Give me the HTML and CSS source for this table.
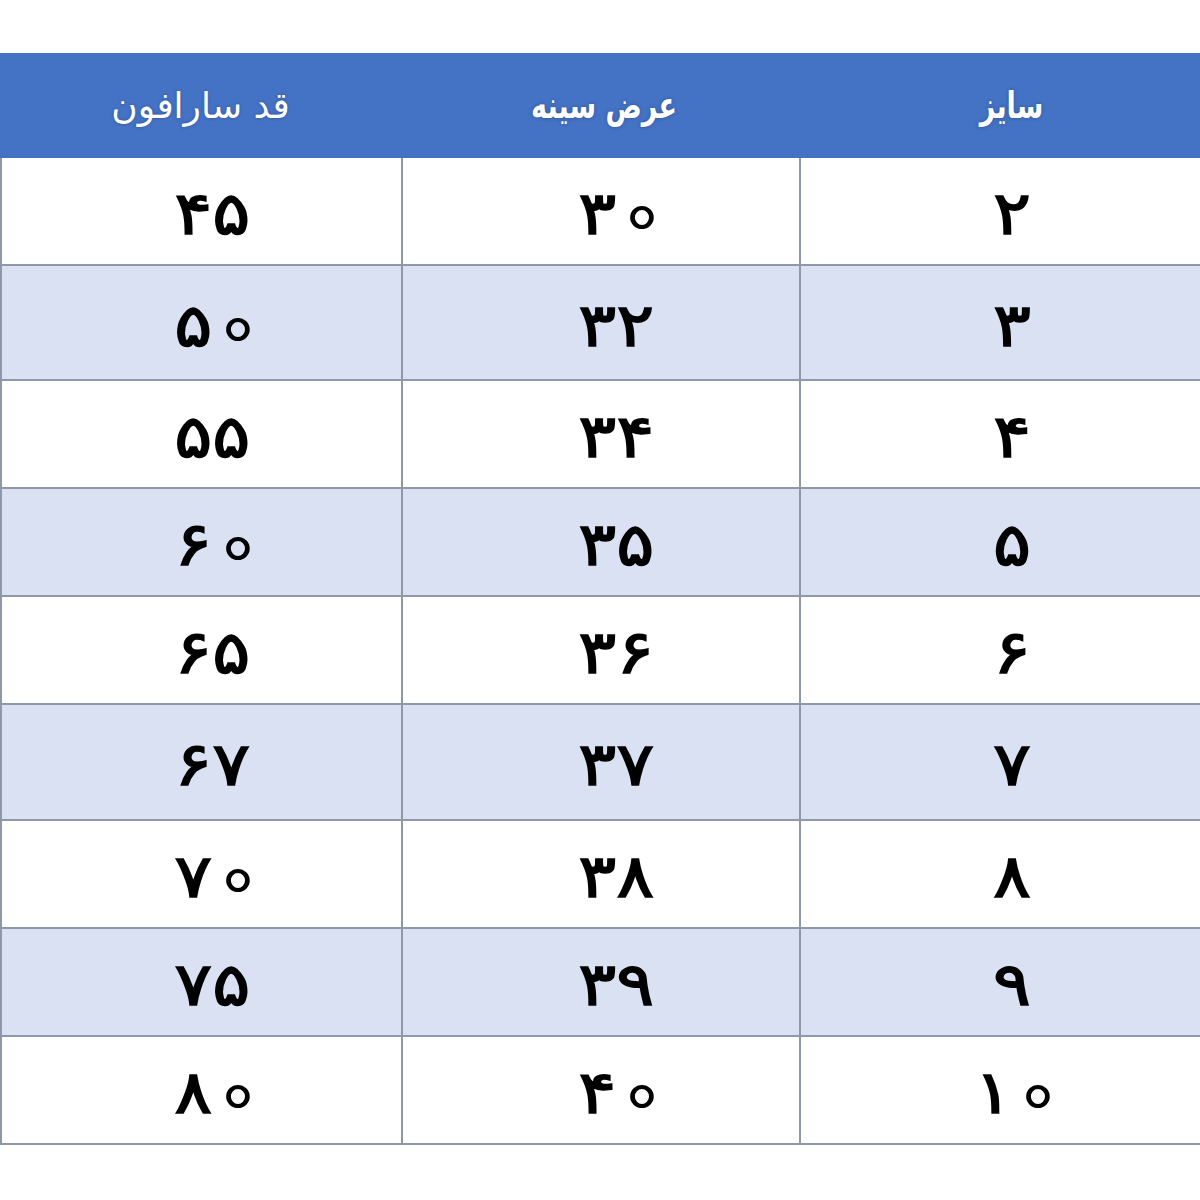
FILE: index.html
```html
<!DOCTYPE html>
<html lang="fa" dir="rtl">
<head>
<meta charset="utf-8">
<link rel="stylesheet" href="styles.css">
</head>
<body>
<div class="sheet">
  <div class="row head">
    <div class="cell"><span class="ht">سایز</span></div>
    <div class="cell"><span class="ht">عرض سینه</span></div>
    <div class="cell"><span class="hl">قد سارافون</span></div>
  </div>
  <div class="row r108"><div class="cell"><span class="n">۲</span></div><div class="cell"><span class="n">۳<span class="z">۰</span></span></div><div class="cell"><span class="n">۴۵</span></div></div>
  <div class="row alt r115"><div class="cell"><span class="n">۳</span></div><div class="cell"><span class="n">۳۲</span></div><div class="cell"><span class="n">۵<span class="z">۰</span></span></div></div>
  <div class="row r108"><div class="cell"><span class="n">۴</span></div><div class="cell"><span class="n">۳۴</span></div><div class="cell"><span class="n">۵۵</span></div></div>
  <div class="row alt r108"><div class="cell"><span class="n">۵</span></div><div class="cell"><span class="n">۳۵</span></div><div class="cell"><span class="n">۶<span class="z">۰</span></span></div></div>
  <div class="row r108"><div class="cell"><span class="n">۶</span></div><div class="cell"><span class="n">۳۶</span></div><div class="cell"><span class="n">۶۵</span></div></div>
  <div class="row alt r116"><div class="cell"><span class="n">۷</span></div><div class="cell"><span class="n">۳۷</span></div><div class="cell"><span class="n">۶۷</span></div></div>
  <div class="row r108"><div class="cell"><span class="n">۸</span></div><div class="cell"><span class="n">۳۸</span></div><div class="cell"><span class="n">۷<span class="z">۰</span></span></div></div>
  <div class="row alt r108"><div class="cell"><span class="n">۹</span></div><div class="cell"><span class="n">۳۹</span></div><div class="cell"><span class="n">۷۵</span></div></div>
  <div class="row r108"><div class="cell"><span class="n">۱<span class="z">۰</span></span></div><div class="cell"><span class="n">۴<span class="z">۰</span></span></div><div class="cell"><span class="n">۸<span class="z">۰</span></span></div></div>
</div>
</body>
</html>
```
FILE: styles.css
```css
html, body {
  margin: 0;
  padding: 0;
  background: #ffffff;
}
body {
  font-family: "DejaVu Sans", "Noto Sans", sans-serif;
}
.sheet {
  margin-top: 53px;
  width: 1200px;
  direction: rtl;
}
.row {
  display: grid;
  grid-template-columns: 401px 398px 401px;
  border-bottom: 2px solid #8f98a6;
  box-sizing: border-box;
  background: #ffffff;
}
.row.alt {
  background: #d9e1f3;
}
.row.head {
  height: 105px;
  background: #4472c4;
  border-bottom: none;
}
.r108 { height: 108px; }
.r115 { height: 115px; }
.r116 { height: 116px; }
.cell {
  display: flex;
  align-items: center;
  justify-content: center;
  font-size: 60px;
  font-weight: normal;
  color: #000000;
  border-left: 2px solid #8f98a6;
  box-sizing: border-box;
  padding-top: 4px;
}
.row .cell:nth-child(1) {
  padding-left: 24px;
}
.row .cell:nth-child(2) {
  padding-left: 30px;
}
.row .cell:nth-child(3) {
  padding-left: 22px;
}
.n {
  display: inline-block;
  direction: ltr;
  unicode-bidi: isolate;
  -webkit-text-stroke: 1.5px #000000;
  transform: scaleX(1.18);
}
.z {
  display: inline-block;
  position: relative;
  width: 32px;
  color: transparent;
  -webkit-text-stroke: 0;
}
.z::after {
  content: "";
  position: absolute;
  width: 12px;
  height: 15px;
  border: 4.5px solid #000000;
  border-left-width: 4px;
  border-right-width: 4px;
  border-radius: 50%;
  right: 0;
  top: 50%;
  margin-top: -7px;
}
.head .cell {
  border-left: none;
  color: #ffffff;
  padding-top: 0;
  text-shadow: 0 0 3px rgba(40, 60, 110, 0.6);
}
.head .cell:nth-child(1) { padding-left: 24px; }
.head .cell:nth-child(2) { padding-left: 8px; }
.head .cell:nth-child(3) { padding-left: 0; }
.ht {
  display: inline-block;
  font-size: 27px;
  font-weight: bold;
  transform: scaleY(1.35);
}
.hl {
  font-size: 36px;
  font-weight: normal;
}
```
